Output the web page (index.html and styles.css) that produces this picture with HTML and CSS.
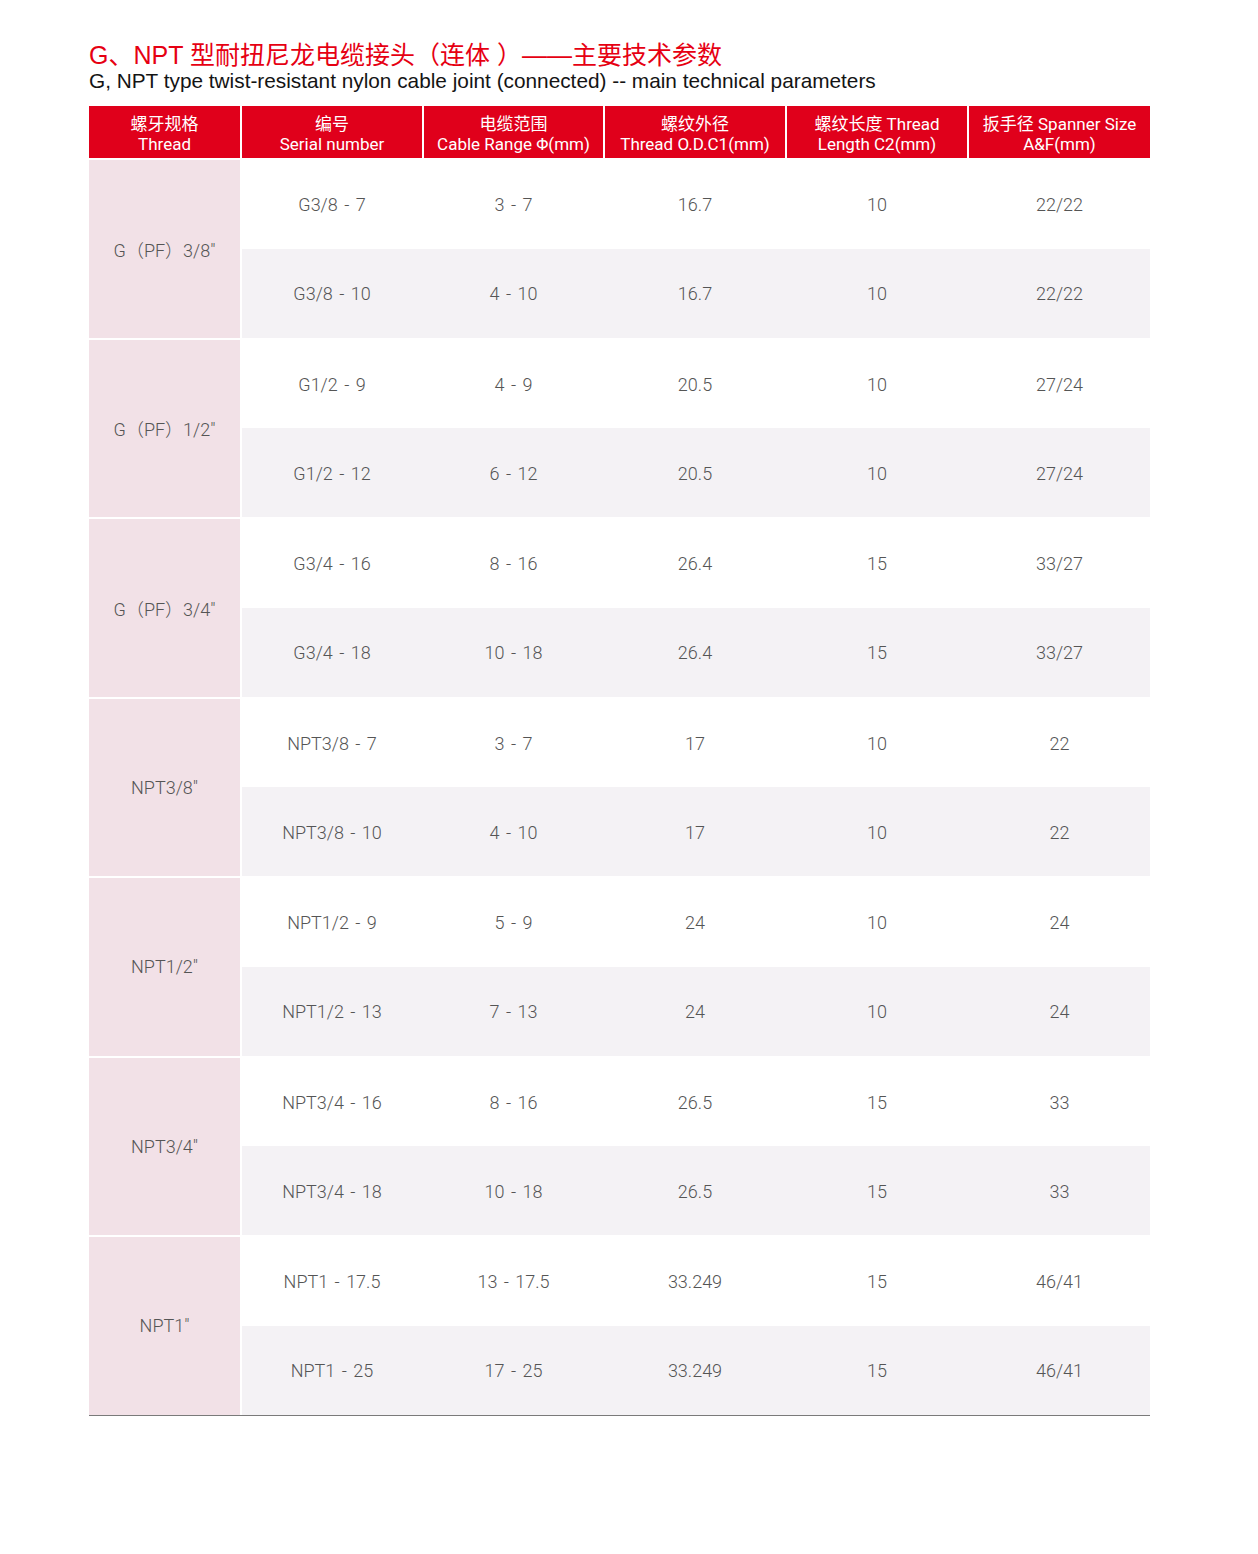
FILE: index.html
```html
<!DOCTYPE html>
<html lang="zh">
<head>
<meta charset="utf-8">
<title>G、NPT 型耐扭尼龙电缆接头</title>
<link rel="stylesheet" href="styles.css">
</head>
<body>
<div class="page">
  <h1 class="title">G、NPT 型耐扭尼龙电缆接头（连体 ）——主要技术参数</h1>
  <p class="subtitle">G, NPT type twist-resistant nylon cable joint (connected) -- main technical parameters</p>

  <div class="table">
    <div class="head">
      <div class="hcell">螺牙规格<br>Thread</div>
      <div class="hcell">编号<br>Serial number</div>
      <div class="hcell">电缆范围<br>Cable Range Φ(mm)</div>
      <div class="hcell">螺纹外径<br>Thread O.D.C1(mm)</div>
      <div class="hcell">螺纹长度 Thread<br>Length C2(mm)</div>
      <div class="hcell">扳手径 Spanner Size<br>A&amp;F(mm)</div>
    </div>

    <div class="group">
      <div class="spec">G（PF）3/8"</div>
      <div class="rows">
        <div class="row"><span>G3/8 - 7</span><span>3 - 7</span><span>16.7</span><span>10</span><span>22/22</span></div>
        <div class="row alt"><span>G3/8 - 10</span><span>4 - 10</span><span>16.7</span><span>10</span><span>22/22</span></div>
      </div>
    </div>

    <div class="group">
      <div class="spec">G（PF）1/2"</div>
      <div class="rows">
        <div class="row"><span>G1/2 - 9</span><span>4 - 9</span><span>20.5</span><span>10</span><span>27/24</span></div>
        <div class="row alt"><span>G1/2 - 12</span><span>6 - 12</span><span>20.5</span><span>10</span><span>27/24</span></div>
      </div>
    </div>

    <div class="group">
      <div class="spec">G（PF）3/4"</div>
      <div class="rows">
        <div class="row"><span>G3/4 - 16</span><span>8 - 16</span><span>26.4</span><span>15</span><span>33/27</span></div>
        <div class="row alt"><span>G3/4 - 18</span><span>10 - 18</span><span>26.4</span><span>15</span><span>33/27</span></div>
      </div>
    </div>

    <div class="group">
      <div class="spec">NPT3/8"</div>
      <div class="rows">
        <div class="row"><span>NPT3/8 - 7</span><span>3 - 7</span><span>17</span><span>10</span><span>22</span></div>
        <div class="row alt"><span>NPT3/8 - 10</span><span>4 - 10</span><span>17</span><span>10</span><span>22</span></div>
      </div>
    </div>

    <div class="group">
      <div class="spec">NPT1/2"</div>
      <div class="rows">
        <div class="row"><span>NPT1/2 - 9</span><span>5 - 9</span><span>24</span><span>10</span><span>24</span></div>
        <div class="row alt"><span>NPT1/2 - 13</span><span>7 - 13</span><span>24</span><span>10</span><span>24</span></div>
      </div>
    </div>

    <div class="group">
      <div class="spec">NPT3/4"</div>
      <div class="rows">
        <div class="row"><span>NPT3/4 - 16</span><span>8 - 16</span><span>26.5</span><span>15</span><span>33</span></div>
        <div class="row alt"><span>NPT3/4 - 18</span><span>10 - 18</span><span>26.5</span><span>15</span><span>33</span></div>
      </div>
    </div>

    <div class="group">
      <div class="spec">NPT1"</div>
      <div class="rows">
        <div class="row"><span>NPT1 - 17.5</span><span>13 - 17.5</span><span>33.249</span><span>15</span><span>46/41</span></div>
        <div class="row alt"><span>NPT1 - 25</span><span>17 - 25</span><span>33.249</span><span>15</span><span>46/41</span></div>
      </div>
    </div>
  </div>
</div>
</body>
</html>
```

FILE: styles.css
```css
* { box-sizing: border-box; }

body {
  margin: 0;
  background: #ffffff;
  font-family: Roboto, "Noto Sans CJK SC", sans-serif;
}

.page {
  width: 1258px;
  padding: 40px 0 0 89px;
}

.title {
  margin: 0;
  font-family: "Liberation Sans", "Noto Sans CJK SC", sans-serif;
  font-weight: 400;
  font-size: 25px;
  line-height: 30px;
  color: #e60012;
}

.subtitle {
  margin: 0;
  font-family: "Liberation Sans", "Noto Sans CJK SC", sans-serif;
  font-size: 20.8px;
  line-height: 22px;
  color: #141414;
}

.table {
  width: 1061px;
  margin-top: 14px;
  display: flex;
  flex-direction: column;
  gap: 2px;
  border-bottom: 1px solid #7a7a7a;
}

.head {
  display: grid;
  grid-template-columns: 151px 180px 179px 180px 180px 181px;
  column-gap: 2px;
  height: 52px;
}

.hcell {
  background: #e0001b;
  color: #ffffff;
  font-family: Roboto, "Noto Sans CJK SC", sans-serif;
  font-size: 17px;
  line-height: 20px;
  display: flex;
  align-items: center;
  justify-content: center;
  text-align: center;
  padding-top: 4px;
}

.group {
  display: grid;
  grid-template-columns: 151px 1fr;
  column-gap: 2px;
  height: 177.5px;
}

.spec {
  background: #f2e1e7;
  color: #555555;
  font-family: Roboto, "Noto Sans CJK SC", sans-serif;
  font-weight: 300;
  font-size: 18px;
  display: flex;
  align-items: center;
  justify-content: center;
}

.rows {
  display: grid;
  grid-template-rows: 1fr 1fr;
}

.row {
  display: grid;
  grid-template-columns: 180px 179px 180px 180px 181px;
  column-gap: 2px;
  align-items: center;
  background: #ffffff;
  padding-top: 2px;
}

.row.alt {
  background: #f4f2f5;
}

.row span {
  text-align: center;
  color: #555555;
  font-weight: 300;
  font-size: 18px;
  line-height: 22px;
  word-spacing: 2px;
}
```
